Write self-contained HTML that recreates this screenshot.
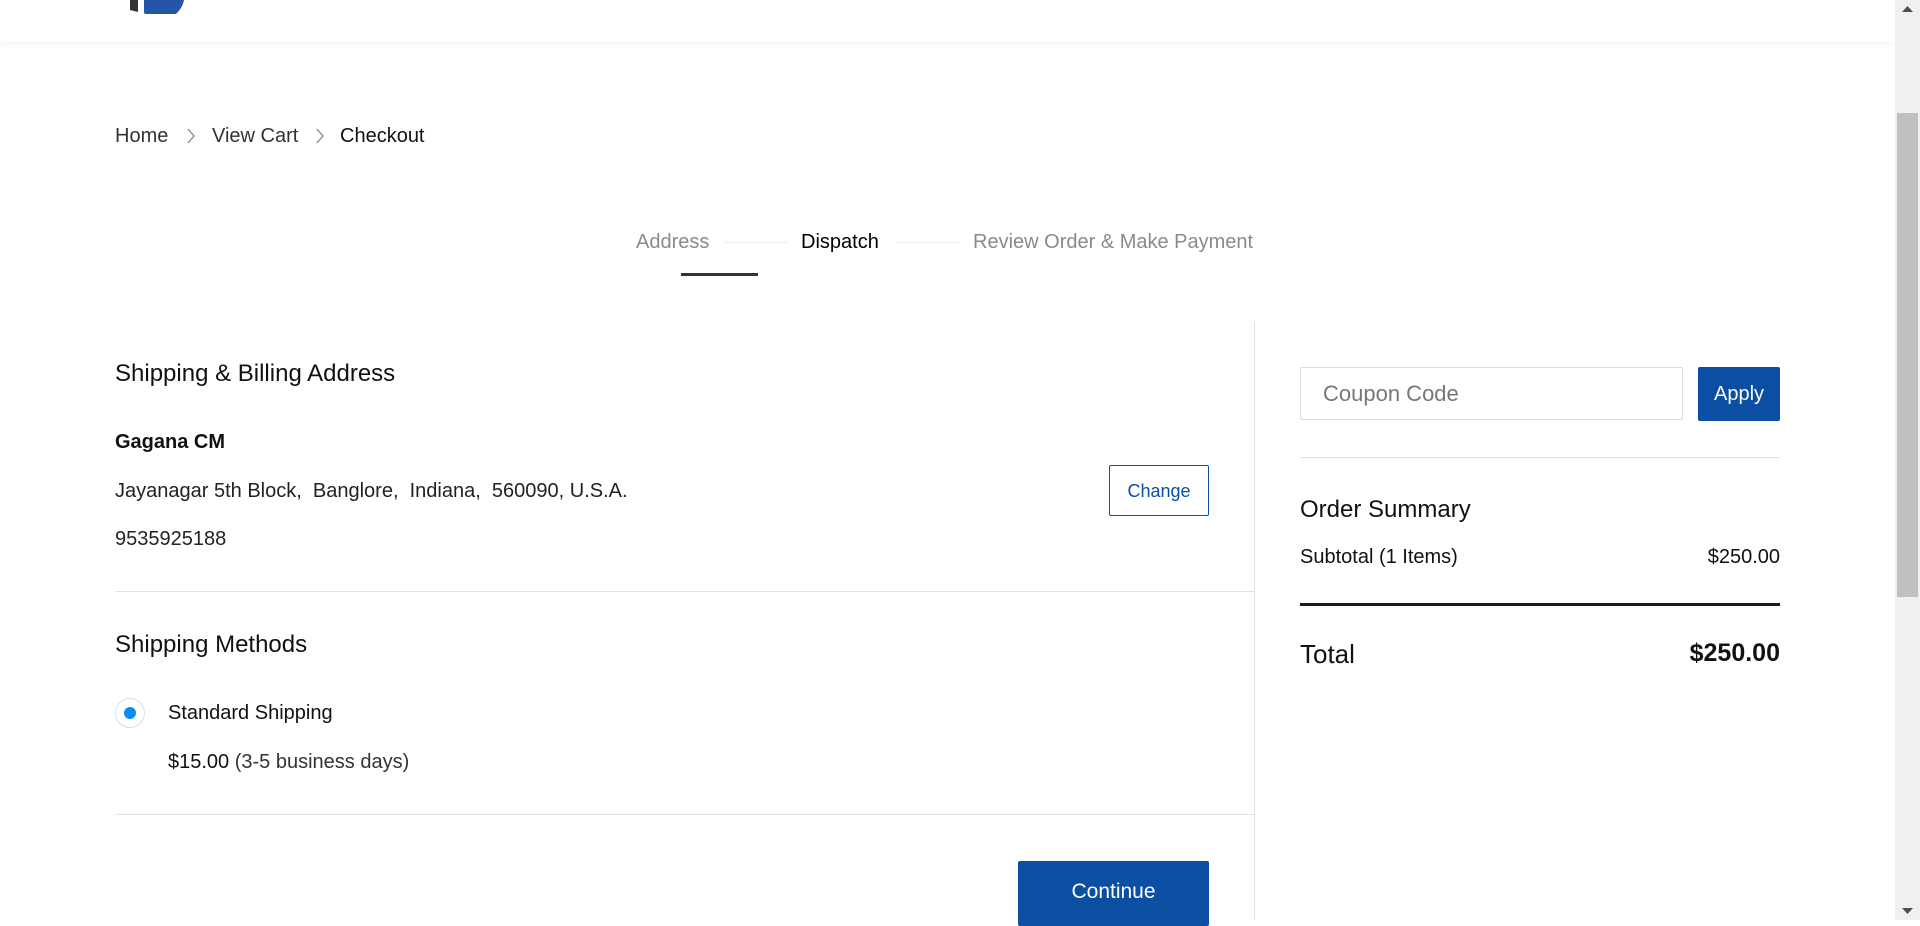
<!DOCTYPE html>
<html><head><meta charset="utf-8"><style>
*{margin:0;padding:0;box-sizing:border-box}
body{width:1920px;height:920px;overflow:hidden;background:#fff;font-family:"Liberation Sans",sans-serif;color:#111;position:relative}
.a{position:absolute;white-space:nowrap;line-height:1}
.hdr{position:absolute;left:0;top:0;width:1895px;height:42px;background:#fff;box-shadow:0 2px 8px rgba(0,0,0,.06)}
.sb{position:absolute;left:1895px;top:0;width:25px;height:920px;background:#f0f0f0}
.th{position:absolute;left:1897px;top:113px;width:21px;height:484px;background:#c0c0c0}
.b{font-size:20px;color:#222}
.h{font-size:24px;color:#111}
.line{position:absolute;height:1px;background:#e2e2e2}
</style></head><body>
<div class="hdr"></div>
<svg class="a" style="left:118px;top:0" width="70" height="14" viewBox="0 0 70 14"><path d="M12 0 L20 0 L20 12 L12 10 Z" fill="#333"/><path d="M26 0 H66 A24 24 0 0 1 26 13 Z" fill="#2456a6"/></svg>
<div class="sb"></div><div class="th"></div>
<svg class="a" style="left:1901px;top:5px" width="13" height="8"><path d="M1 7 L6.5 1 L12 7Z" fill="#505050"/></svg>
<svg class="a" style="left:1901px;top:907px" width="13" height="8"><path d="M1 1 L6.5 7 L12 1Z" fill="#505050"/></svg>

<div class="a b" style="left:115px;top:126px;color:#333">Home</div>
<svg class="a" style="left:186px;top:128px" width="10" height="16"><path d="M2 1 L8 8 L2 15" fill="none" stroke="#888" stroke-width="1.3"/></svg>
<div class="a b" style="left:212px;top:126px;color:#333">View Cart</div>
<svg class="a" style="left:315px;top:128px" width="10" height="16"><path d="M2 1 L8 8 L2 15" fill="none" stroke="#888" stroke-width="1.3"/></svg>
<div class="a b" style="left:340px;top:126px;color:#111">Checkout</div>

<div class="a b" style="left:636px;top:232px;color:#8a8a8a">Address</div>
<div class="a" style="left:725px;top:242px;width:62px;border-top:1px dotted #ddd"></div>
<div class="a b" style="left:801px;top:232px;color:#000">Dispatch</div>
<div class="a" style="left:898px;top:242px;width:62px;border-top:1px dotted #ddd"></div>
<div class="a b" style="left:973px;top:232px;color:#8a8a8a">Review Order &amp; Make Payment</div>
<div class="a" style="left:681px;top:273px;width:77px;height:3px;background:#333"></div>

<div class="a" style="left:1254px;top:322px;width:1px;height:598px;background:#e2e2e2"></div>
<div class="a h" style="left:115px;top:362px">Shipping &amp; Billing Address</div>
<div class="a b" style="left:115px;top:432px;font-weight:bold;color:#111">Gagana CM</div>
<div class="a b" style="left:115px;top:481px">Jayanagar 5th Block,&nbsp; Banglore,&nbsp; Indiana,&nbsp; 560090, U.S.A.</div>
<div class="a b" style="left:115px;top:529px">9535925188</div>
<div class="a" style="left:1109px;top:465px;width:100px;height:51px;border:1px solid #0b4ea2;border-radius:2px;color:#0b4ea2;font-size:18px;display:flex;align-items:center;justify-content:center">Change</div>
<div class="line" style="left:115px;top:591px;width:1139px"></div>
<div class="a h" style="left:115px;top:633px">Shipping Methods</div>
<div class="a" style="left:115px;top:698px;width:30px;height:30px;border:1px solid #ddd;border-radius:50%"></div>
<div class="a" style="left:124px;top:707px;width:12px;height:12px;background:#0a8cf0;border-radius:50%"></div>
<div class="a b" style="left:168px;top:703px;color:#111">Standard Shipping</div>
<div class="a b" style="left:168px;top:752px;color:#111">$15.00 <span style="color:#333">(3-5 business days)</span></div>
<div class="line" style="left:115px;top:814px;width:1139px"></div>
<div class="a" style="left:1018px;top:861px;width:191px;height:65px;background:#0b4ea2;border-radius:2px;color:#fff;font-size:21px;display:flex;align-items:center;justify-content:center;padding-bottom:4px">Continue</div>

<div class="a" style="left:1300px;top:367px;width:383px;height:53px;border:1px solid #ddd;border-radius:2px"></div>
<div class="a" style="left:1323px;top:383px;font-size:22px;color:#777">Coupon Code</div>
<div class="a" style="left:1698px;top:367px;width:82px;height:54px;background:#0b4ea2;border-radius:2px;color:#fff;font-size:20px;display:flex;align-items:center;justify-content:center">Apply</div>
<div class="line" style="left:1300px;top:457px;width:480px"></div>
<div class="a h" style="left:1300px;top:498px">Order Summary</div>
<div class="a b" style="left:1300px;top:547px;color:#111">Subtotal (1 Items)</div>
<div class="a b" style="right:140px;top:547px;color:#111">$250.00</div>
<div class="a" style="left:1300px;top:603px;width:480px;height:3px;background:#1a1a1a"></div>
<div class="a" style="left:1300px;top:641px;font-size:26px;color:#111">Total</div>
<div class="a" style="right:140px;top:641px;font-size:25px;font-weight:bold;color:#111">$250.00</div>
</body></html>
